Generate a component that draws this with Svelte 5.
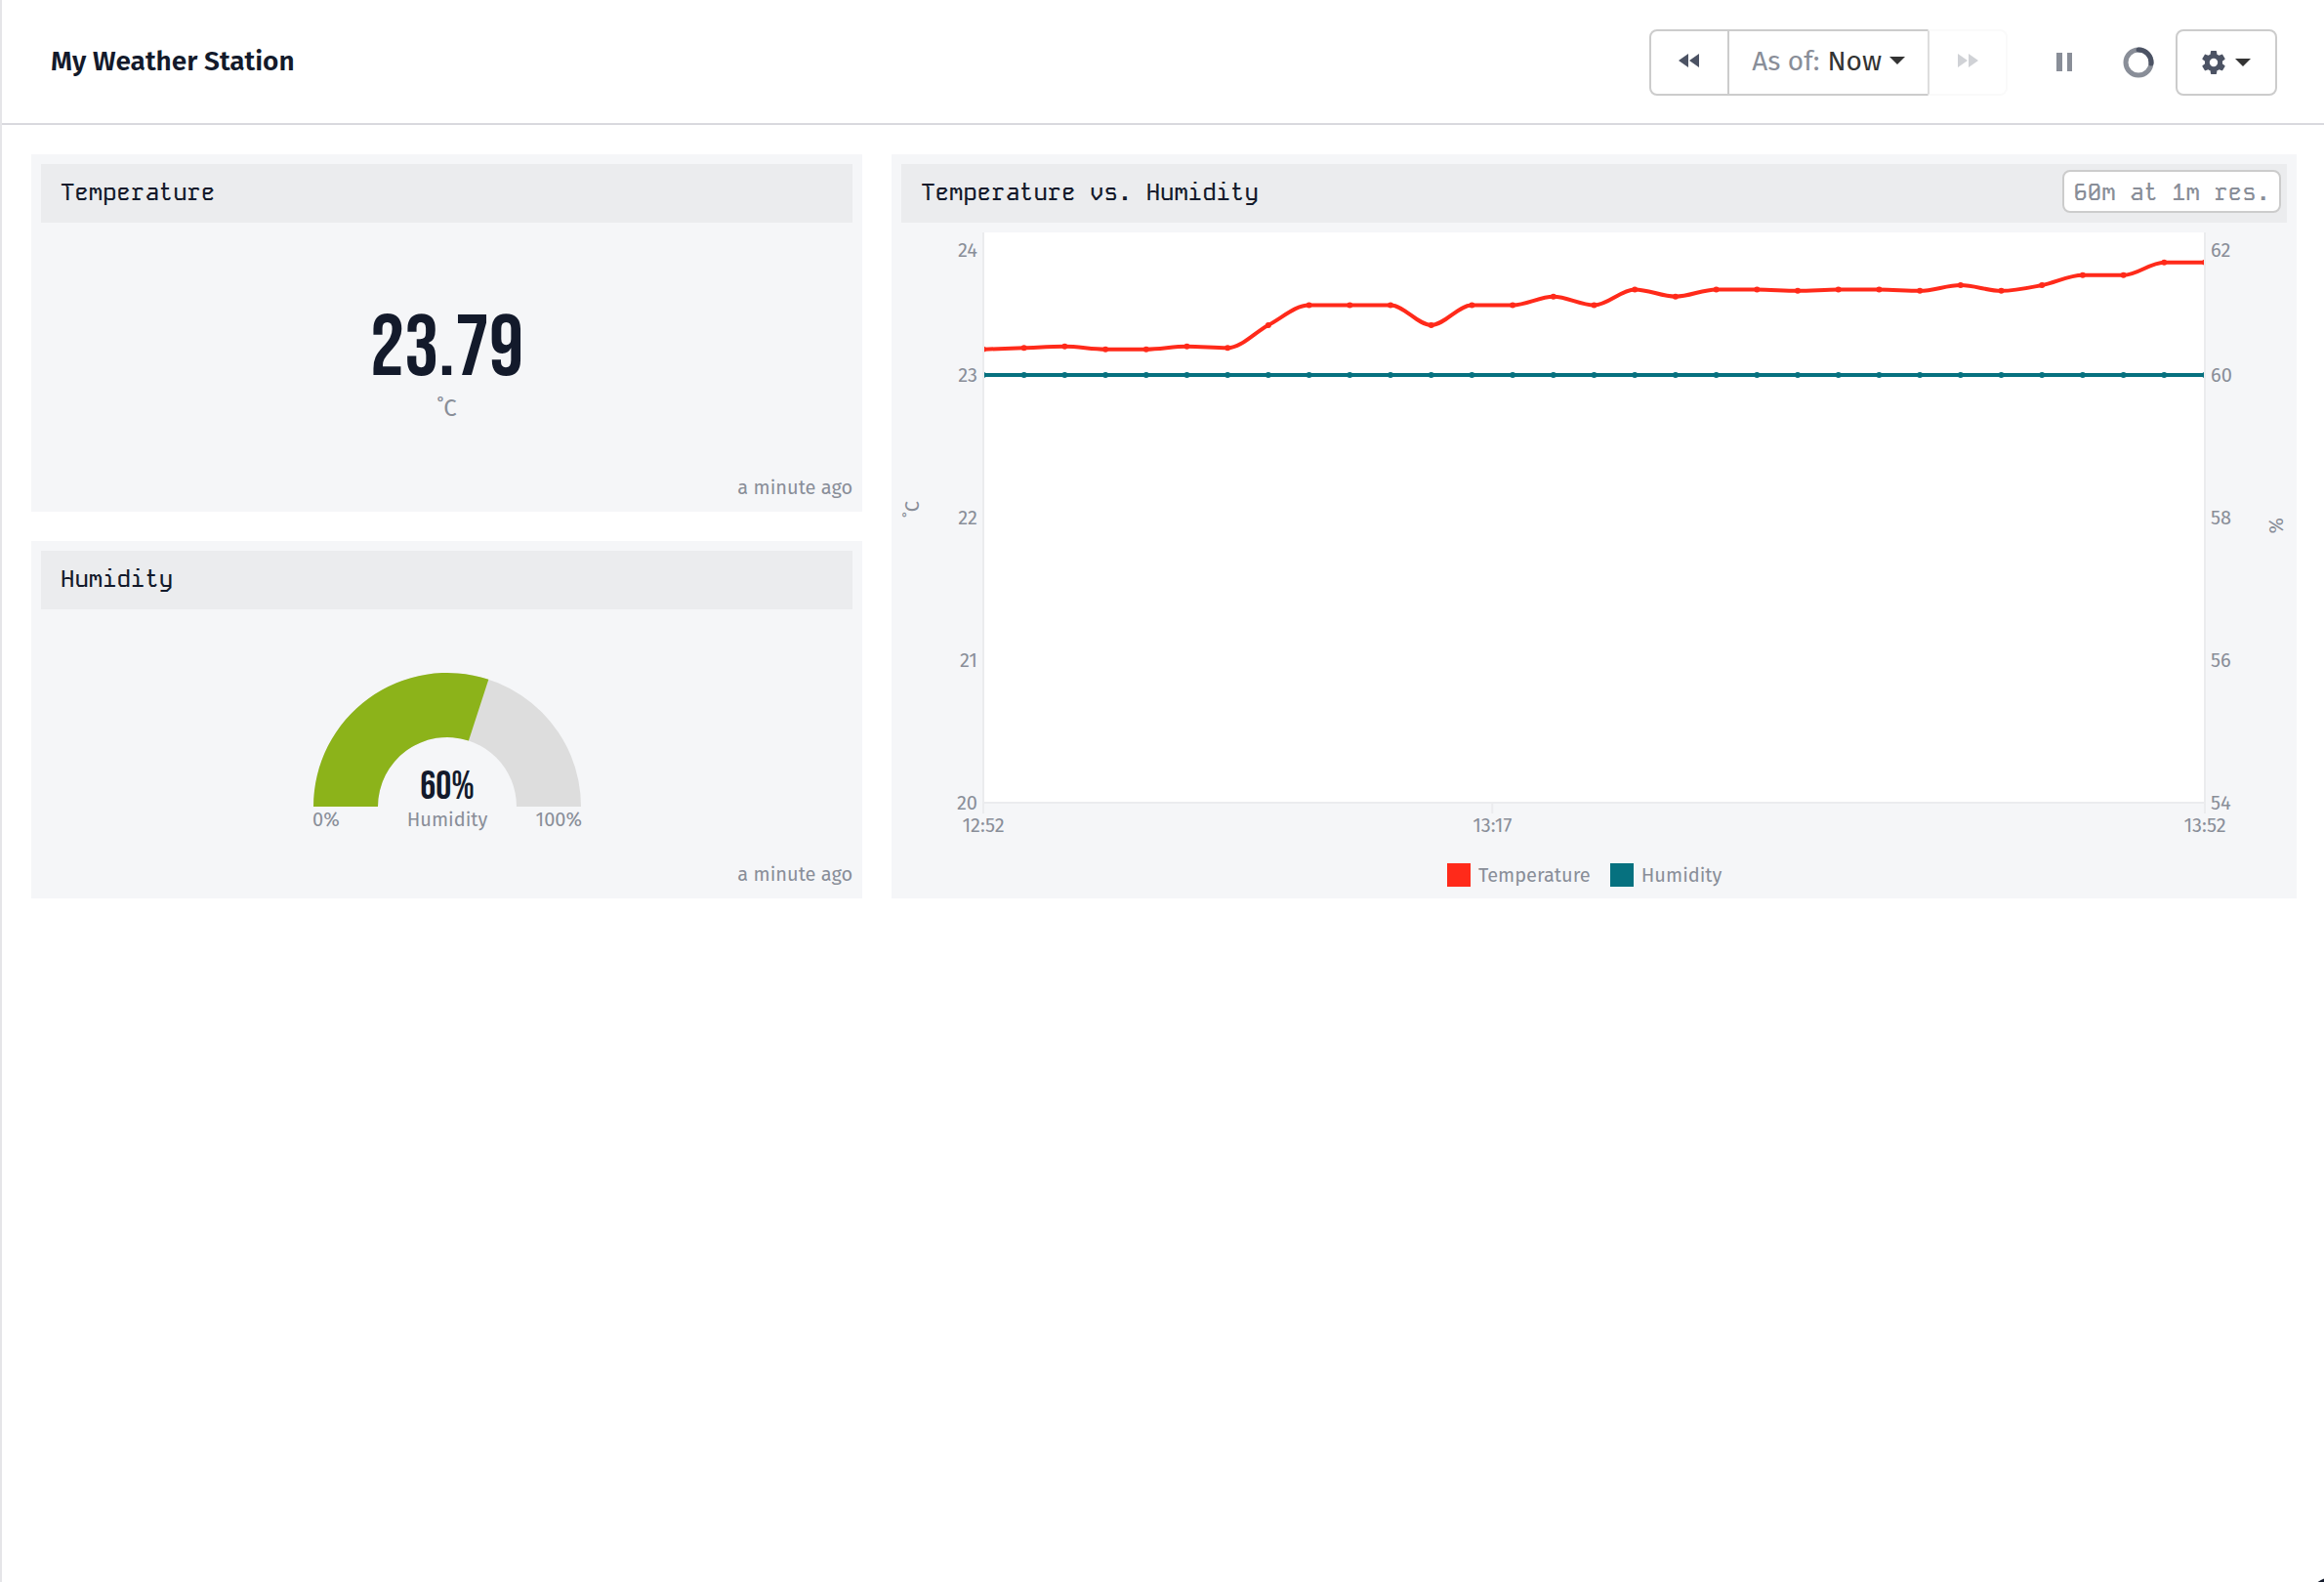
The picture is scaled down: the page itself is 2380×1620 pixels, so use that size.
<script>
	const temperature = [
		23.18, 23.19, 23.2, 23.18, 23.18, 23.2, 23.19, 23.35, 23.49, 23.49, 23.49, 23.35, 23.49, 23.49,
		23.55, 23.49, 23.6, 23.55, 23.6, 23.6, 23.59, 23.6, 23.6, 23.59, 23.63, 23.59, 23.63, 23.7, 23.7,
		23.79, 23.79
	];
	const humidity = temperature.map(() => 60);

	const series = [
		{ name: 'Temperature', color: '#ff2a1a', values: temperature, min: 20, max: 24 },
		{ name: 'Humidity', color: '#06717f', values: humidity, min: 54, max: 62 }
	];
	const leftTicks = [24, 23, 22, 21, 20];
	const rightTicks = [62, 60, 58, 56, 54];
	const timeTicks = [
		{ at: 0, label: '12:52' },
		{ at: 12.5, label: '13:17' },
		{ at: 30, label: '13:52' }
	];

	const gutter = 84;
	const axisHeight = 38;

	let chartWidth = $state(1418);
	let chartHeight = $state(622);

	let plotRight = $derived(chartWidth - gutter);
	let plotBottom = $derived(chartHeight - axisHeight);

	let lines = $derived(
		series.map((s) => {
			const points = s.values.map((v, i) => ({
				x: timeX(i),
				y: plotBottom - ((v - s.min) / (s.max - s.min)) * plotBottom
			}));
			return { ...s, points, path: monotonePath(points) };
		})
	);

	function timeX(i) {
		return gutter + (i / (temperature.length - 1)) * (plotRight - gutter);
	}

	function tickY(i) {
		// keep the topmost label inside the chart
		return Math.max(18, (i / 4) * plotBottom) + 7;
	}

	function monotonePath(p) {
		const slope = (a, b) => (b.y - a.y) / (b.x - a.x);
		const tangents = p.map((pt, i) => {
			if (i === 0) return slope(p[0], p[1]);
			if (i === p.length - 1) return slope(p[i - 1], pt);
			const s0 = slope(p[i - 1], pt);
			const s1 = slope(pt, p[i + 1]);
			if (s0 * s1 <= 0) return 0;
			return Math.sign(s0) * Math.min(2 * Math.abs(s0), 2 * Math.abs(s1), Math.abs(s0 + s1) / 2);
		});
		let d = `M${p[0].x},${p[0].y}`;
		for (let i = 1; i < p.length; i++) {
			const dx = (p[i].x - p[i - 1].x) / 3;
			d += `C${p[i - 1].x + dx},${p[i - 1].y + dx * tangents[i - 1]} ${p[i].x - dx},${p[i].y - dx * tangents[i]} ${p[i].x},${p[i].y}`;
		}
		return d;
	}

	function gaugeArc(from, to) {
		const point = (r, t) => {
			const a = Math.PI * (1 - t);
			return `${138 + r * Math.cos(a)},${138 - r * Math.sin(a)}`;
		};
		return `M${point(137, from)}A137,137 0 0 1 ${point(137, to)}L${point(71, to)}A71,71 0 0 0 ${point(71, from)}Z`;
	}
</script>

<div class="page">
	<header class="topbar">
		<h1>My Weather Station</h1>
		<div class="controls">
			<div class="btn-group">
				<button class="btn step" aria-label="Back">
					<svg width="22" height="14" viewBox="0 0 22 14" fill="currentColor">
						<path d="M10 0v14L0 7zM21 0v14L11 7z" />
					</svg>
				</button>
				<button class="btn as-of">
					<span class="muted">As of:</span>
					<span>Now</span>
					<span class="caret"></span>
				</button>
				<button class="btn step" aria-label="Forward" disabled>
					<svg width="22" height="14" viewBox="0 0 22 14" fill="currentColor">
						<path d="M1 0v14l10-7zM12 0v14l10-7z" />
					</svg>
				</button>
			</div>
			<button class="pause" aria-label="Pause">
				<svg width="16" height="20" viewBox="0 0 16 20" fill="currentColor">
					<path d="M0 0h6v19H0zM11 0h5v19h-5z" />
				</svg>
			</button>
			<svg class="spinner" width="32" height="32" viewBox="0 0 32 32" fill="none" stroke-width="5">
				<circle cx="16" cy="16" r="13" stroke="#898e98" />
				<path d="M16 3a13 13 0 0 1 13 14" stroke="#4c5364" stroke-linecap="round" />
			</svg>
			<button class="btn settings" aria-label="Settings">
				<svg width="24" height="24" viewBox="2 2 20 20" fill="currentColor">
					<path
						d="M19.43 12.98c.04-.32.07-.64.07-.98s-.03-.66-.07-.98l2.11-1.65c.19-.15.24-.42.12-.64l-2-3.46c-.12-.22-.39-.3-.61-.22l-2.49 1c-.52-.4-1.08-.73-1.69-.98l-.38-2.65C14.46 2.18 14.25 2 14 2h-4c-.25 0-.46.18-.49.42l-.38 2.65c-.61.25-1.17.59-1.69.98l-2.49-1c-.23-.09-.49 0-.61.22l-2 3.46c-.13.22-.07.49.12.64l2.11 1.65c-.04.32-.07.65-.07.98s.03.66.07.98l-2.11 1.65c-.19.15-.24.42-.12.64l2 3.46c.12.22.39.3.61.22l2.49-1c.52.4 1.08.73 1.69.98l.38 2.65c.03.24.24.42.49.42h4c.25 0 .46-.18.49-.42l.38-2.65c.61-.25 1.17-.59 1.69-.98l2.49 1c.23.09.49 0 .61-.22l2-3.46c.12-.22.07-.49-.12-.64l-2.11-1.65zM12 15.5a3.5 3.5 0 1 1 0-7 3.5 3.5 0 0 1 0 7z"
					/>
				</svg>
				<span class="caret"></span>
			</button>
		</div>
	</header>

	<main class="dashboard">
		<section class="card">
			<div class="card-header"><h2>Temperature</h2></div>
			<div class="card-body">
				<div class="value">23.79</div>
				<div class="unit">˚C</div>
			</div>
			<div class="updated">a minute ago</div>
		</section>

		<section class="card wide">
			<div class="card-header">
				<h2>Temperature vs. Humidity</h2>
				<button class="resolution">60m at 1m res.</button>
			</div>
			<div class="chart" bind:clientWidth={chartWidth} bind:clientHeight={chartHeight}>
				<svg width="100%" height="100%">
					<rect x={gutter} y="0" width={plotRight - gutter} height={plotBottom} fill="#fff" />
					<path
						class="axis"
						d="M{gutter},0V{plotBottom + 11}M{plotRight},0V{plotBottom + 11}M{timeX(12.5)},{plotBottom}v11M{gutter},{plotBottom}H{plotRight}"
					/>
					{#each leftTicks as tick, i}
						<text x={gutter - 6} y={tickY(i)} text-anchor="end">{tick}</text>
					{/each}
					{#each rightTicks as tick, i}
						<text x={plotRight + 6} y={tickY(i)}>{tick}</text>
					{/each}
					{#each timeTicks as tick}
						<text x={timeX(tick.at)} y={plotBottom + 30} text-anchor="middle">{tick.label}</text>
					{/each}
					<text transform="translate(18 {plotBottom / 2}) rotate(-90)">˚C</text>
					<text transform="translate({chartWidth - 4} {plotBottom / 2}) rotate(-90)" text-anchor="end">%</text>

					<svg x={gutter + 1} y="0" width={plotRight - gutter - 2} height={plotBottom}>
						<g transform="translate({-gutter - 1} 0)">
							{#each lines as line}
								<path d={line.path} fill="none" stroke={line.color} stroke-width="4" />
								{#each line.points as p}
									<circle cx={p.x} cy={p.y} r="3" fill={line.color} />
								{/each}
							{/each}
						</g>
					</svg>
				</svg>
			</div>
			<ul class="legend">
				{#each series as s}
					<li><span class="swatch" style="background:{s.color}"></span>{s.name}</li>
				{/each}
			</ul>
		</section>

		<section class="card">
			<div class="card-header"><h2>Humidity</h2></div>
			<div class="card-body">
				<svg width="276" height="166" viewBox="0 0 276 166">
					<path d={gaugeArc(0, 1)} fill="#ddd" />
					<path d={gaugeArc(0, 0.6)} fill="#8cb31a" />
					<text class="gauge-value" x="138" y="130" text-anchor="middle">60%</text>
					<text x="0" y="158">0%</text>
					<text x="138" y="158" text-anchor="middle">Humidity</text>
					<text x="276" y="158" text-anchor="end">100%</text>
				</svg>
			</div>
			<div class="updated">a minute ago</div>
		</section>
	</main>

	<button class="launcher" aria-label="Help"></button>
</div>

<style>
	:global(body) {
		margin: 0;
		background: #fff;
	}

	.page {
		min-height: 100vh;
		box-sizing: border-box;
		border-left: 2px solid #e5e5e8;
		font-family: 'Fira Sans', 'Noto Sans', sans-serif;
		font-size: 20px;
		color: #131a2b;
	}

	.topbar {
		display: flex;
		align-items: center;
		justify-content: space-between;
		height: 124px;
		padding: 2px 48px 0 50px;
		border-bottom: 2px solid #d9d9de;
	}

	h1 {
		margin: 0;
		padding-bottom: 4px;
		font-size: 28px;
		font-weight: 600;
	}

	.controls {
		display: flex;
		align-items: center;
	}

	.btn-group {
		display: flex;
	}

	button {
		font: inherit;
		cursor: pointer;
	}

	.btn {
		display: flex;
		align-items: center;
		justify-content: center;
		gap: 8px;
		height: 68px;
		padding: 0 23px;
		box-sizing: border-box;
		background: #fff;
		border: 2px solid #ccc;
		border-radius: 8px;
		color: #4c5364;
	}

	.btn-group .btn + .btn {
		margin-left: -2px;
		border-top-left-radius: 0;
		border-bottom-left-radius: 0;
	}

	.btn-group .btn:not(:last-child) {
		border-top-right-radius: 0;
		border-bottom-right-radius: 0;
	}

	.step {
		width: 82px;
	}

	.step svg {
		margin-bottom: 4px;
	}

	.step:disabled {
		border-color: #fafafa;
		border-left-color: #ddd;
		color: #d0d2d6;
		cursor: default;
	}

	.btn.as-of {
		padding-bottom: 4px;
		font-size: 28px;
		color: #333;
	}

	.muted {
		color: #898e98;
	}

	.caret {
		border-top: 8px solid #333;
		border-left: 8px solid transparent;
		border-right: 8px solid transparent;
	}

	.pause {
		margin-left: 50px;
		padding: 0;
		border: none;
		background: none;
		line-height: 0;
		color: #898e98;
	}

	.spinner {
		margin: 0 22px 0 52px;
	}

	.settings {
		width: 104px;
		gap: 10px;
	}

	.dashboard {
		display: grid;
		grid-template-columns: repeat(8, 1fr);
		grid-auto-rows: minmax(366px, auto);
		gap: 30px;
		padding: 30px 28px 30px 30px;
	}

	.card {
		grid-column: 1 / span 3;
		display: flex;
		flex-direction: column;
		box-sizing: border-box;
		min-width: 0;
		padding: 10px;
		background: #f5f6f8;
	}

	.card.wide {
		grid-column: 4 / span 5;
		grid-row: 1 / span 2;
	}

	.card-header {
		display: flex;
		align-items: center;
		justify-content: space-between;
		height: 56px;
		padding: 0 6px 4px 20px;
		background: #ebecee;
	}

	h2 {
		margin: 0;
		font-family: 'Kode Mono', 'Liberation Mono', monospace;
		font-size: 24px;
		font-weight: 500;
	}

	.resolution {
		height: 44px;
		padding: 0 9px;
		background: #fff;
		border: 2px solid #ccc;
		border-radius: 8px;
		font-family: 'Kode Mono', 'Liberation Mono', monospace;
		font-size: 24px;
		font-weight: 500;
		color: #898e98;
	}

	.card-body {
		flex: 1;
		display: flex;
		flex-direction: column;
		align-items: center;
		justify-content: center;
		padding-top: 38px;
	}

	.value {
		margin-bottom: 2px;
		font-family: 'Bebas Neue', 'Roboto Condensed', 'Liberation Sans', sans-serif;
		font-size: 88px;
		line-height: 84px;
	}

	.unit {
		font-size: 24px;
		line-height: 32px;
		color: #898e98;
	}

	.updated {
		line-height: 30px;
		text-align: right;
		color: #898e98;
	}

	.chart {
		flex: 1;
		min-height: 0;
		margin-top: 10px;
	}

	.chart > svg {
		display: block;
	}

	.axis {
		fill: none;
		stroke: #ebecee;
		stroke-width: 2;
	}

	text {
		fill: #898e98;
		font-size: 20px;
	}

	.gauge-value {
		fill: #131a2b;
		font-family: 'Bebas Neue', 'Roboto Condensed', 'Liberation Sans', sans-serif;
		font-size: 40px;
	}

	.legend {
		display: flex;
		justify-content: center;
		align-items: flex-end;
		height: 48px;
		margin: 0;
		padding: 0 0 2px;
		list-style: none;
		color: #898e98;
	}

	.legend li {
		display: flex;
		align-items: center;
		gap: 8px;
		margin-right: 20px;
		line-height: 24px;
	}

	.swatch {
		width: 24px;
		height: 24px;
	}

	.launcher {
		position: fixed;
		right: -68px;
		bottom: -88px;
		width: 96px;
		height: 96px;
		border: none;
		border-radius: 50%;
		background: #131a2b;
	}
</style>
